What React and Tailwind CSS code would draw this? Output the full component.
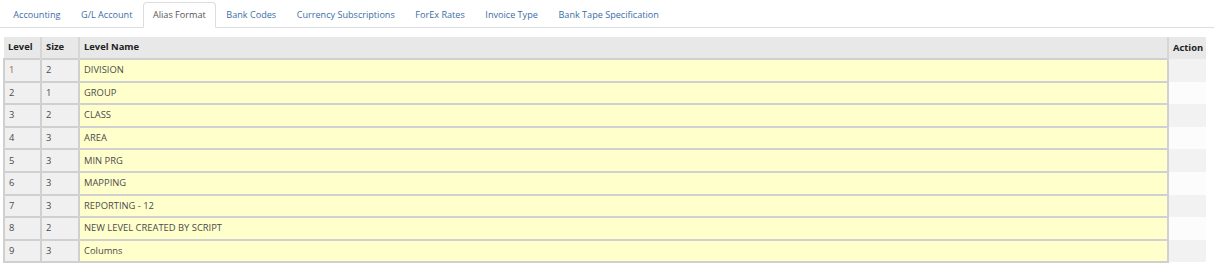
const tabs = [
    'Accounting',
    'G/L Account',
    'Alias Format',
    'Bank Codes',
    'Currency Subscriptions',
    'ForEx Rates',
    'Invoice Type',
    'Bank Tape Specification',
];

const levels = [
    { level: 1, size: 2, name: 'DIVISION' },
    { level: 2, size: 1, name: 'GROUP' },
    { level: 3, size: 2, name: 'CLASS' },
    { level: 4, size: 3, name: 'AREA' },
    { level: 5, size: 3, name: 'MIN PRG' },
    { level: 6, size: 3, name: 'MAPPING' },
    { level: 7, size: 3, name: 'REPORTING - 12' },
    { level: 8, size: 2, name: 'NEW LEVEL CREATED BY SCRIPT' },
    { level: 9, size: 3, name: 'Columns' },
];

const App = () => {
    const active = 'Alias Format';

    return (
        <div className="w-[1214px] h-[271px] bg-white font-['Open_Sans',sans-serif] text-[9.4px] overflow-hidden">
            {/* Tabs */}
            <ul className="flex pl-[3px] pt-[2px] border-b border-[#dddddd] h-[28px] text-[9.1px]">
                {tabs.map((t) => (
                    <li
                        key={t}
                        className={
                            t === active
                                ? 'px-[8.3px] h-[26px] flex items-center border border-[#dddddd] border-b-white rounded-t-[4px] -mb-px bg-white text-[#555555]'
                                : 'px-[9.3px] h-[26px] flex items-center text-[#3a6ea5]'
                        }
                    >
                        <span className="px-px">{t}</span>
                    </li>
                ))}
            </ul>

            {/* Table */}
            <div className="pt-[9px] pl-[3px]">
                <table className="w-[1203px] border-collapse table-fixed">
                    <colgroup>
                        <col className="w-[37px]" />
                        <col className="w-[38px]" />
                        <col />
                        <col className="w-[38px]" />
                    </colgroup>
                    <thead>
                        <tr className="h-[22px] bg-[#e8e8e8] text-[#222222] font-bold text-left">
                            <th className="pl-[4px] border-r-2 border-[#d6d6d6]">Level</th>
                            <th className="pl-[4px] border-r-2 border-[#d6d6d6]">Size</th>
                            <th className="pl-[4px] border-r-2 border-[#d6d6d6]">Level Name</th>
                            <th className="pl-[4px]">Action</th>
                        </tr>
                    </thead>
                    <tbody className="text-[#4a4a4a]">
                        {levels.map((row, i) => (
                            <tr key={row.level} className="h-[22.6px]">
                                <td className={`pl-[4px] bg-[#f0f0f0] border-2 border-[#d0d0d0] ${i === 0 ? 'text-[#a0624f]' : ''}`}>
                                    {row.level}
                                </td>
                                <td className="pl-[4px] bg-[#f0f0f0] border-2 border-[#d0d0d0]">{row.size}</td>
                                <td className="pl-[4px] bg-[#ffffcc] border-2 border-[#d0d0d0]">{row.name}</td>
                                <td className={i % 2 === 0 ? 'bg-[#f2f2f2]' : 'bg-[#fcfcfc]'}></td>
                            </tr>
                        ))}
                    </tbody>
                </table>
            </div>
        </div>
    );
};

export default App;
